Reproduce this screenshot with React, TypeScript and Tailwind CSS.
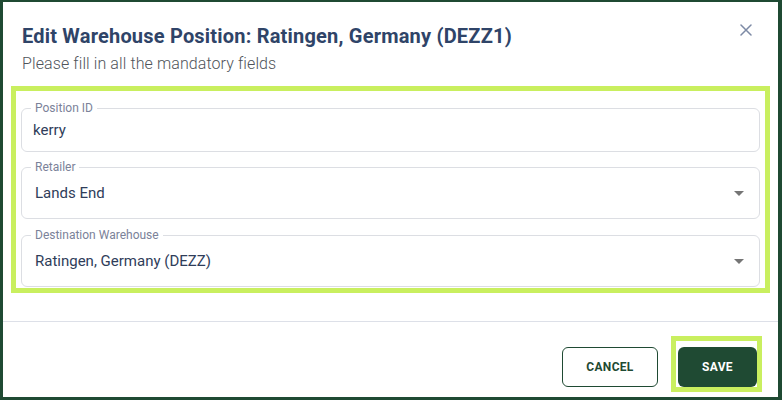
import React from "react";

function CaretDown() {
  return (
    <svg width="10" height="5" viewBox="0 0 10 5" className="shrink-0">
      <path d="M0 0 L10 0 L5 5 Z" fill="#757575" />
    </svg>
  );
}

function CloseIcon() {
  return (
    <svg width="12" height="12" viewBox="0 0 12 12">
      <path d="M1 1 L11 11 M11 1 L1 11" stroke="#7d8aa5" strokeWidth="1.5" strokeLinecap="round" />
    </svg>
  );
}

type FieldProps = {
  label: string;
  value: string;
  select?: boolean;
  heightClass: string;
  padClass: string;
};

function OutlinedField({ label, value, select, heightClass, padClass }: FieldProps) {
  return (
    <div className={`relative ${heightClass}`}>
      {/* the fieldset border sits at the legend's midline, so pull it up by half the legend */}
      <fieldset className="absolute -top-[6px] left-0 right-0 bottom-0 m-0 rounded-[6px] border border-[#dcdee3] px-[9px]">
        <legend className="px-[4px] text-[12px] leading-[12px] text-[#7b8299]">{label}</legend>
      </fieldset>
      <div className={`relative flex h-full items-center justify-between ${padClass}`}>
        <span className="text-[15px] text-[#2f3d5a]">{value}</span>
        {select && (
          <span className="mr-[16px] flex items-center">
            <CaretDown />
          </span>
        )}
      </div>
    </div>
  );
}

export default function App() {
  return (
    <div className="w-[782px] h-[400px] bg-[#1f4a33] pt-[2px] pl-[3px] pr-[4px] pb-[3px] font-['Roboto','Liberation_Sans',sans-serif]">
      <div className="flex h-full flex-col bg-white">
        {/* header */}
        <div className="flex items-start justify-between pl-[19px] pr-[22px] pt-[18px]">
          <div>
            <h2 className="text-[20px] font-bold leading-[32px] tracking-[0.2px] text-[#2f4468]">
              Edit Warehouse Position: Ratingen, Germany (DEZZ1)
            </h2>
            <p className="text-[16px] font-light leading-[24px] tracking-[0.1px] text-[#4f545a]">
              Please fill in all the mandatory fields
            </p>
          </div>
          <button className="flex h-[20px] w-[20px] items-center justify-center">
            <CloseIcon />
          </button>
        </div>

        {/* form */}
        <div className="relative mx-[8px] mt-[10px] flex flex-col gap-[15px] px-[10px] pt-[22px] pb-[6px]">
          <OutlinedField label="Position ID" value="kerry" heightClass="h-[44px]" padClass="pl-[12px]" />
          <OutlinedField label="Retailer" value="Lands End" select heightClass="h-[52px]" padClass="pl-[14px]" />
          <div className="mt-[1px]">
            <OutlinedField
              label="Destination Warehouse"
              value="Ratingen, Germany (DEZZ)"
              select
              heightClass="h-[52px]"
              padClass="pl-[14px]"
            />
          </div>
          <div className="pointer-events-none absolute inset-0 border-[5px] border-[#c9ef5f]" />
        </div>

        {/* footer */}
        <div className="mt-[28px] border-t border-[#dde0e8]" />
        <div className="flex justify-end gap-[20px] pr-[21px] pt-[25px]">
          <button className="h-[40px] w-[96px] rounded-[6px] border border-[#1f4a33] text-[12px] font-bold tracking-[0.3px] text-[#1f4a33]">
            CANCEL
          </button>
          <div className="relative">
            <div className="pointer-events-none absolute -left-[7px] -top-[11px] -right-[5px] -bottom-[5px] border-[5px] border-[#c9ef5f]" />
            <button className="relative h-[40px] w-[79px] rounded-[6px] bg-[#1f4a33] text-[12px] font-bold tracking-[0.3px] text-white">
              SAVE
            </button>
          </div>
        </div>
      </div>
    </div>
  );
}
